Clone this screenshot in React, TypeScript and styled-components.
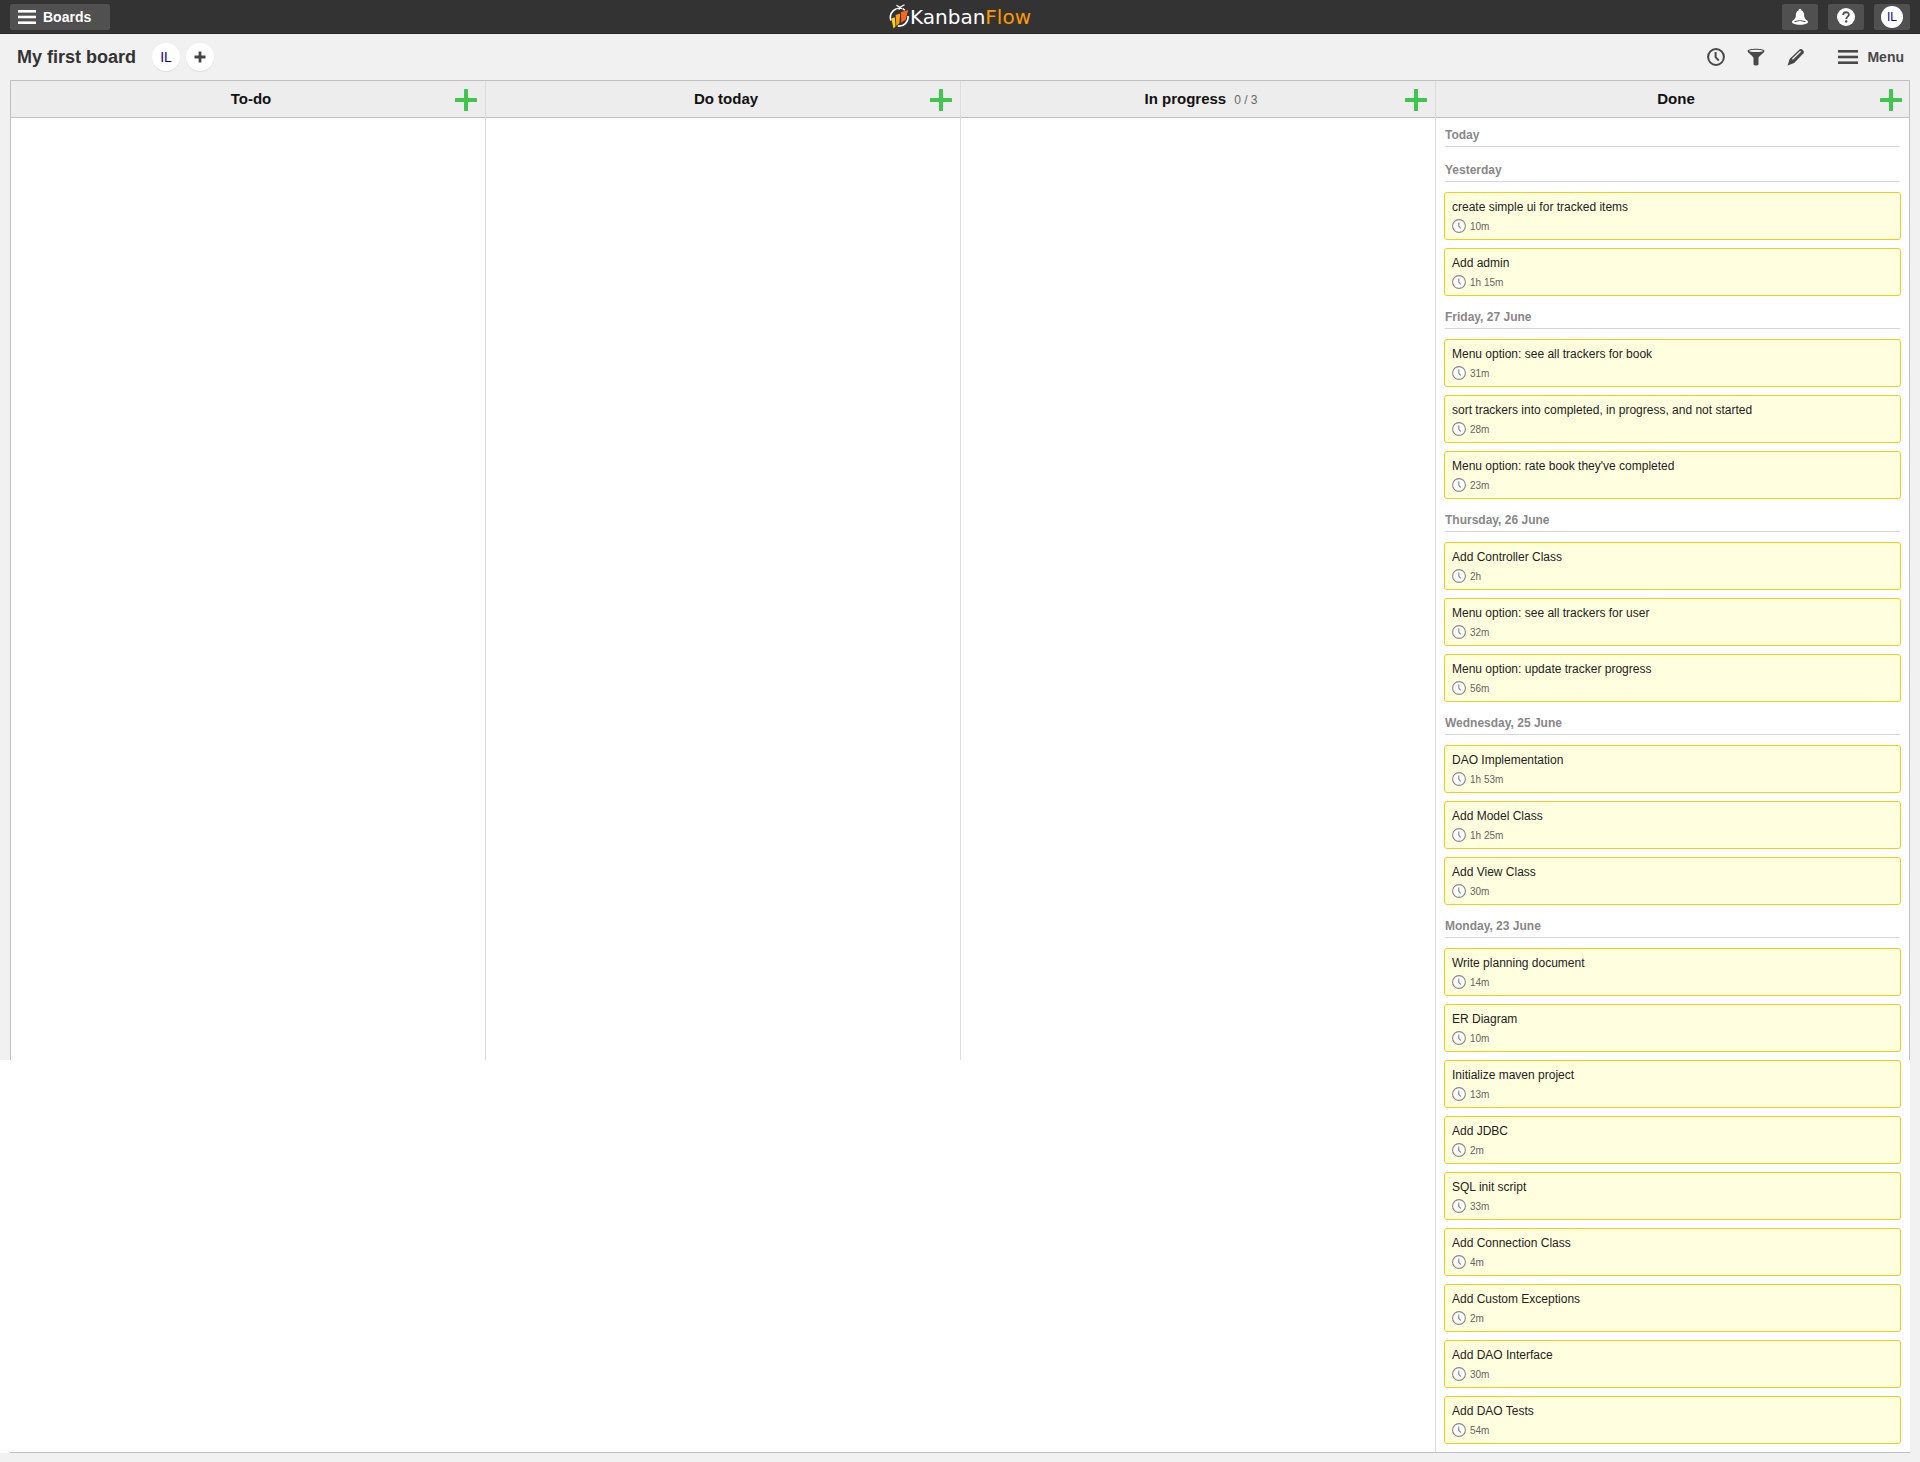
import React from "react";
import styled, { createGlobalStyle } from "styled-components";

const GlobalStyle = createGlobalStyle`
  * { box-sizing: border-box; }
  body {
    margin: 0;
    background: #f1f1f1;
    font-family: "Liberation Sans", Arial, sans-serif;
    color: #222;
  }
  button { font-family: inherit; border: 0; padding: 0; cursor: pointer; }
  h1, h2, h3, p, ul { margin: 0; padding: 0; }
  ul { list-style: none; }
  svg { display: block; flex: none; }
`;

const FOLD = 980;

const Page = styled.div`
  display: flex;
  flex-direction: column;
  height: 100vh;
  padding-bottom: 9px;
`;

const TopBar = styled.header`
  display: grid;
  grid-template-columns: 1fr auto 1fr;
  align-items: center;
  height: 34px;
  flex: none;
  padding: 0 10px;
  background: #333;
  border-bottom: 1px solid #292929;
`;

const BoardsButton = styled.button`
  display: flex;
  align-items: center;
  gap: 7px;
  width: 100px;
  height: 26px;
  padding-left: 8px;
  border-radius: 2px;
  background: #505050;
  color: #fff;
  font-size: 14px;
  font-weight: bold;
`;

const Logo = styled.a`
  display: flex;
  align-items: center;
  gap: 1px;
  height: 33px;
  color: #fff;
  font: 20px/24px "DejaVu Sans", sans-serif;
  text-decoration: none;
`;

const LogoAccent = styled.span`
  color: #f90;
`;

const TopActions = styled.div`
  display: flex;
  justify-content: flex-end;
  gap: 10px;
`;

const TopButton = styled.button`
  display: flex;
  align-items: center;
  justify-content: center;
  width: 36px;
  height: 26px;
  border-radius: 2px;
  background: #505050;
`;

const Initials = styled.span`
  display: flex;
  align-items: center;
  justify-content: center;
  width: 22px;
  height: 22px;
  border-radius: 50%;
  background: #fff;
  color: #0f00a0;
  font-size: 12px;
`;

const Toolbar = styled.div`
  display: flex;
  align-items: center;
  justify-content: space-between;
  height: 46px;
  flex: none;
  padding: 0 16px 0 17px;
`;

const ToolbarGroup = styled.div<{ $gap: number }>`
  display: flex;
  align-items: center;
  gap: ${(p) => p.$gap}px;
`;

const BoardTitle = styled.h1`
  font-size: 18px;
  line-height: 24px;
  color: #333;
`;

const RoundButton = styled.button`
  display: flex;
  align-items: center;
  justify-content: center;
  width: 28px;
  height: 28px;
  border-radius: 50%;
  background: #fff;
  color: #0f00a0;
  font-size: 14px;
  box-shadow: 0 1px 1px rgba(0, 0, 0, 0.08);
`;

const ToolButton = styled.button`
  display: flex;
  align-items: center;
  gap: 9px;
  background: none;
  color: #484848;
  font-size: 14px;
  font-weight: bold;
`;

const ToolSet = styled.div`
  display: flex;
  gap: 22px;
`;

const Shell = styled.main`
  display: grid;
  grid-template-columns: 10px minmax(0, 1fr) 10px;
  flex: 1;
  min-height: 0;
`;

const Gutter = styled.div<{ $side: "left" | "right" }>`
  display: flex;
  flex-direction: column;
  min-height: 0;
  background: ${(p) => (p.$side === "left" ? "#fff" : "#f1f1f1")};
  &::before {
    content: "";
    height: ${FOLD}px;
    background: #f1f1f1;
    ${(p) => (p.$side === "right" ? "margin-left: -1px; border-left: 1px solid #c0c0c0;" : "")}
  }
`;

const Board = styled.div`
  display: grid;
  grid-template-columns: repeat(4, minmax(0, 1fr));
  grid-template-rows: minmax(0, 1fr);
  min-height: 0;
  overflow: hidden;
  background: #fff;
  border-top: 1px solid #c0c0c0;
  border-bottom: 1px solid #c0c0c0;
`;

const ColumnBox = styled.section<{ $first: boolean; $full: boolean }>`
  border-left: 1px solid ${(p) => (p.$first ? "#c0c0c0" : "#ddd")};
  ${(p) => (p.$full ? "" : `height: ${FOLD - 1}px;`)}
`;

const ColumnHeader = styled.div`
  display: flex;
  align-items: center;
  height: 37px;
  padding: 0 4px 0 40px;
  background: #ededed;
  border-bottom: 1px solid #c0c0c0;
`;

const ColumnName = styled.h2`
  display: flex;
  flex: 1;
  align-items: baseline;
  justify-content: center;
  gap: 8px;
  font-size: 15px;
  line-height: 20px;
  color: #111;
`;

const Limit = styled.span`
  font-size: 12px;
  font-weight: normal;
  color: #666;
`;

const AddButton = styled.button`
  display: flex;
  justify-content: center;
  width: 30px;
  padding: 2px 0 0;
  background: none;
`;

const Groups = styled.div`
  padding: 4px 9px 0 8px;
`;

const DayHeading = styled.h3`
  margin: 0 1px 10px;
  padding: 5px 0 3px;
  border-bottom: 1px solid #d6d6d6;
  font-size: 12px;
  line-height: 16px;
  color: #888;
`;

const Card = styled.li`
  margin-bottom: 8px;
  padding: 6px 7px;
  border: 1px solid #f4cd16;
  border-radius: 3px;
  background: #ffffdf;
`;

const CardTitle = styled.p`
  margin-bottom: 4px;
  font-size: 12px;
  line-height: 16px;
`;

const CardTime = styled.div`
  display: flex;
  align-items: center;
  gap: 4px;
  height: 14px;
  font-size: 10px;
  color: #666;
`;

const Bars = ({ width }: { width: number }) => (
  <svg width={width} height="14" viewBox={`0 0 ${width} 14`} fill="currentColor" aria-hidden="true">
    <rect width={width} height="2.6" y="0" />
    <rect width={width} height="2.6" y="5.7" />
    <rect width={width} height="2.6" y="11.4" />
  </svg>
);

const LogoMark = () => (
  <svg width="20" height="25" viewBox="0 0 20 25" fill="none" aria-hidden="true">
    <path d="M7.4 4.7A9 9 0 0 0 2 16.5M13.8 4.8l2.1 1.3M19 12A9 9 0 0 1 8.8 22.1" stroke="#fff" strokeWidth="1.7" />
    <path d="M7.4 1.2 11 3.3 15.5.7M11 3.3l-1 2.5M7.4 4.7c2-.8 4-.8 6 0" stroke="#fff" strokeWidth="1.2" />
    <path d="m2.4 14.5 3.4-1.3.7 9.4-2 2z" fill="#ffd500" />
    <path d="m6.7 11 4.5-1.6-.8 9.8-3 2.8z" fill="#ff9e0b" />
    <path d="m12 8 7.2-2-2.6 9.7-4.4 3z" fill="#f9651a" />
  </svg>
);

const BellIcon = () => (
  <svg width="18" height="18" viewBox="0 0 18 18" aria-hidden="true">
    <path
      d="M9 .8c-1 0-1.5.7-1.3 1.5C5.3 3.2 5 5.3 4.8 8c-.2 2.4-1.3 3.5-3.2 4.8-1.1.8-.8 2 .5 2.6 4 1.9 9.8 1.9 13.8 0 1.3-.6 1.6-1.8.5-2.6-1.9-1.3-3-2.4-3.2-4.8-.2-2.7-.5-4.8-2.9-5.7C10.5 1.5 10 .8 9 .8z"
      fill="#fff"
    />
    <path d="M3.500 13.800c3.200-1.300 7.800-1.300 11 0" stroke="#505050" strokeWidth="1.100" fill="none" />
    <circle cx="9" cy="14.6" r="1.7" fill="#fff" />
  </svg>
);

const HelpIcon = () => (
  <svg width="18" height="18" viewBox="0 0 18 18" fill="none" aria-hidden="true">
    <circle cx="9" cy="9" r="9" fill="#fff" />
    <path d="M6.2 7c0-3.600 5.700-3.600 5.700-.3 0 2-2.700 2-2.700 4.400" stroke="#505050" strokeWidth="1.800" />
    <circle cx="9.2" cy="13.5" r="1.2" fill="#505050" />
  </svg>
);

const ClockIcon = () => (
  <svg width="18" height="18" viewBox="0 0 18 18" fill="none" stroke="#484848" aria-hidden="true">
    <circle cx="9" cy="9" r="7.9" strokeWidth="2" />
    <path d="M8.6 4v5.200l3.200 3.400" strokeWidth="2" />
  </svg>
);

const FilterIcon = () => (
  <svg width="18" height="18" viewBox="0 0 18 18" aria-hidden="true">
    <path d="M.5 3c0-3 17-3 17 0 0 1.500-6 5.500-6 7v6.500c-1 1.400-4 1.400-5 0V10c0-1.500-6-5.500-6-7z" fill="#484848" />
    <ellipse cx="9" cy="2.9" rx="6.8" ry="1.2" fill="#f1f1f1" />
  </svg>
);

const PencilIcon = () => (
  <svg width="18" height="18" viewBox="0 0 18 18" aria-hidden="true">
    <path d="M.6 17.600 2.600 11 12.500 1.600c1.800-1.700 5.600 1.500 4 3.600L7.200 15z" fill="#484848" />
    <path d="m5.400 11.200 8.200-7.900" stroke="#f1f1f1" strokeWidth="1.300" />
  </svg>
);

const SmallPlus = () => (
  <svg width="12" height="12" viewBox="0 0 12 12" fill="#484848" aria-hidden="true">
    <path d="M4.600.5h2.800v4.100h4.100v2.800H7.400v4.100H4.600V7.400H.5V4.600h4.100z" />
  </svg>
);

const AddIcon = () => (
  <svg width="22" height="22" viewBox="0 0 22 22" fill="#3ec64f" aria-hidden="true">
    <rect x="9" width="4" height="22" rx=".6" />
    <rect y="9" width="22" height="4" rx=".6" />
  </svg>
);

const TimeIcon = () => (
  <svg width="14" height="14" viewBox="0 0 14 14" fill="none" stroke="#888" aria-hidden="true">
    <circle cx="7" cy="7" r="6.4" fill="#fff" strokeWidth="1.1" />
    <path d="M6.8 3.600v3.600l2 2.300" strokeWidth="1.1" />
  </svg>
);

type Task = [title: string, time: string];
type Day = { label: string; tasks: Task[] };
type ColumnData = { name: string; limit?: string; days?: Day[] };

const columns: ColumnData[] = [
  { name: "To-do" },
  { name: "Do today" },
  { name: "In progress", limit: "0 / 3" },
  {
    name: "Done",
    days: [
      { label: "Today", tasks: [] },
      {
        label: "Yesterday",
        tasks: [
          ["create simple ui for tracked items", "10m"],
          ["Add admin", "1h 15m"],
        ],
      },
      {
        label: "Friday, 27 June",
        tasks: [
          ["Menu option: see all trackers for book", "31m"],
          ["sort trackers into completed, in progress, and not started", "28m"],
          ["Menu option: rate book they've completed", "23m"],
        ],
      },
      {
        label: "Thursday, 26 June",
        tasks: [
          ["Add Controller Class", "2h"],
          ["Menu option: see all trackers for user", "32m"],
          ["Menu option: update tracker progress", "56m"],
        ],
      },
      {
        label: "Wednesday, 25 June",
        tasks: [
          ["DAO Implementation", "1h 53m"],
          ["Add Model Class", "1h 25m"],
          ["Add View Class", "30m"],
        ],
      },
      {
        label: "Monday, 23 June",
        tasks: [
          ["Write planning document", "14m"],
          ["ER Diagram", "10m"],
          ["Initialize maven project", "13m"],
          ["Add JDBC", "2m"],
          ["SQL init script", "33m"],
          ["Add Connection Class", "4m"],
          ["Add Custom Exceptions", "2m"],
          ["Add DAO Interface", "30m"],
          ["Add DAO Tests", "54m"],
        ],
      },
    ],
  },
];

const Column = ({ column, first }: { column: ColumnData; first: boolean }) => (
  <ColumnBox $first={first} $full={!!column.days}>
    <ColumnHeader>
      <ColumnName>
        {column.name}
        {column.limit && <Limit>{column.limit}</Limit>}
      </ColumnName>
      <AddButton aria-label={`Add task to ${column.name}`}>
        <AddIcon />
      </AddButton>
    </ColumnHeader>
    {column.days && (
      <Groups>
        {column.days.map((day) => (
          <section key={day.label}>
            <DayHeading>{day.label}</DayHeading>
            <ul>
              {day.tasks.map(([title, time]) => (
                <Card key={title}>
                  <CardTitle>{title}</CardTitle>
                  <CardTime>
                    <TimeIcon />
                    {time}
                  </CardTime>
                </Card>
              ))}
            </ul>
          </section>
        ))}
      </Groups>
    )}
  </ColumnBox>
);

export default function App() {
  return (
    <Page>
      <GlobalStyle />
      <TopBar>
        <BoardsButton>
          <Bars width={18} />
          Boards
        </BoardsButton>
        <Logo href="#">
          <LogoMark />
          <span>
            Kanban<LogoAccent>Flow</LogoAccent>
          </span>
        </Logo>
        <TopActions>
          <TopButton aria-label="Notifications">
            <BellIcon />
          </TopButton>
          <TopButton aria-label="Help">
            <HelpIcon />
          </TopButton>
          <TopButton aria-label="Account">
            <Initials>IL</Initials>
          </TopButton>
        </TopActions>
      </TopBar>
      <Toolbar>
        <ToolbarGroup $gap={16}>
          <BoardTitle>My first board</BoardTitle>
          <ToolbarGroup $gap={6}>
            <RoundButton>IL</RoundButton>
            <RoundButton aria-label="Add member">
              <SmallPlus />
            </RoundButton>
          </ToolbarGroup>
        </ToolbarGroup>
        <ToolbarGroup $gap={33}>
          <ToolSet>
            <ToolButton aria-label="Time log">
              <ClockIcon />
            </ToolButton>
            <ToolButton aria-label="Filter">
              <FilterIcon />
            </ToolButton>
            <ToolButton aria-label="Edit board">
              <PencilIcon />
            </ToolButton>
          </ToolSet>
          <ToolButton>
            <Bars width={20} />
            Menu
          </ToolButton>
        </ToolbarGroup>
      </Toolbar>
      <Shell>
        <Gutter $side="left" />
        <Board>
          {columns.map((column, index) => (
            <Column key={column.name} column={column} first={index === 0} />
          ))}
        </Board>
        <Gutter $side="right" />
      </Shell>
    </Page>
  );
}
